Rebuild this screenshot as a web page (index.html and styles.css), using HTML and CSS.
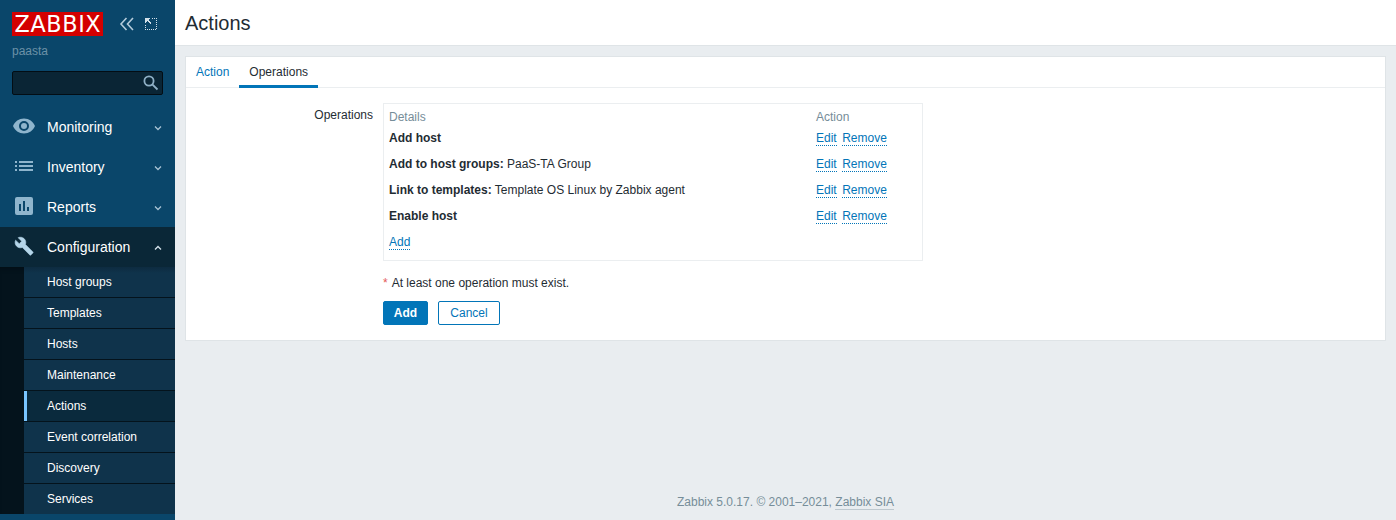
FILE: index.html
```html
<!DOCTYPE html>
<html lang="en">
<head>
<meta charset="utf-8">
<title>Actions</title>
<link rel="stylesheet" href="styles.css">
</head>
<body>
<aside class="sidebar">
  <div class="brand">
    <svg class="logo" width="91" height="24" viewBox="0 0 91 24"><rect width="91" height="24" fill="#d40000"/><text class="logo-text" x="2.600" y="20.300" textLength="86" lengthAdjust="spacing">ZABBIX</text></svg>
    <svg class="collapse" width="16" height="14" viewBox="0 0 16 14"><path d="M7.500 1 2 7l5.500 6M14 1 8.500 7 14 13"/></svg>
    <svg class="kiosk" width="12" height="12" viewBox="0 0 12 12" shape-rendering="crispEdges"><path d="M7 .5h1M9 .5h1M11 .5h1M11 2.500h1M11 4.500h1M11 6.500h1M11 8.500h1M11 10.500h1M0 7.500h1M0 9.500h1M0 11.500h1M2 11.500h1M4 11.500h1M6 11.500h1M8 11.500h1M10 11.500h1"/><path d="M0 .5h5M0 1.500h4M0 2.500h4M0 3.500h2M3 3.500h2M0 4.500h1M4 4.500h2M5 5.500h1"/></svg>
  </div>
  <div class="server">paasta</div>
  <div class="search"><svg width="16" height="16" viewBox="0 0 16 16"><circle cx="6" cy="6" r="4.600"/><path d="m9.300 9.300 5.200 5.200"/></svg></div>
  <nav class="menu">
    <a class="item"><svg class="icon" width="24" height="24" viewBox="0 0 24 24"><path fill-rule="evenodd" d="M12 4.500C7 4.500 2.730 7.610 1 12c1.730 4.390 6 7.500 11 7.500s9.270-3.110 11-7.500c-1.730-4.390-6-7.500-11-7.500zM12 17a5 5 0 1 1 0-10 5 5 0 0 1 0 10zm0-8a3 3 0 1 0 0 6 3 3 0 0 0 0-6z"/></svg><span>Monitoring</span><svg class="chev" width="8" height="6" viewBox="0 0 8 6"><path d="m1 1.500 3 3 3-3"/></svg></a>
    <a class="item"><svg class="icon" width="24" height="24" viewBox="0 0 24 24" shape-rendering="crispEdges"><path d="M3 7h2v2H3zM7 7h14v2H7zM3 11h2v2H3zM7 11h14v2H7zM3 15h2v2H3zM7 15h14v2H7z"/></svg><span>Inventory</span><svg class="chev" width="8" height="6" viewBox="0 0 8 6"><path d="m1 1.500 3 3 3-3"/></svg></a>
    <a class="item"><svg class="icon" width="24" height="24" viewBox="0 0 24 24"><path fill-rule="evenodd" d="M5 3h14a2 2 0 0 1 2 2v14a2 2 0 0 1-2 2H5a2 2 0 0 1-2-2V5a2 2 0 0 1 2-2zM7 10v7h2v-7zM11 7v10h2V7zM15 13v4h2v-4z"/></svg><span>Reports</span><svg class="chev" width="8" height="6" viewBox="0 0 8 6"><path d="m1 1.500 3 3 3-3"/></svg></a>
    <a class="item item-open"><svg class="icon" width="24" height="24" viewBox="0 0 24 24"><g transform="translate(2.300 2.300) scale(.82)"><path stroke-width=".7" d="m22.700 19-9.100-9.100c.9-2.300.4-5-1.500-6.900-2-2-5-2.400-7.400-1.300L9 6 6 9 1.600 4.700C.4 7.100.9 10.100 2.900 12.100c1.900 1.900 4.600 2.400 6.900 1.500l9.100 9.100c.4.4 1 .4 1.400 0l2.300-2.300c.5-.4.5-1.100.1-1.400z"/></g></svg><span>Configuration</span><svg class="chev" width="8" height="6" viewBox="0 0 8 6"><path d="m1 4.500 3-3 3 3"/></svg></a>
    <ul class="submenu">
      <li>Host groups</li>
      <li>Templates</li>
      <li>Hosts</li>
      <li>Maintenance</li>
      <li class="current">Actions</li>
      <li>Event correlation</li>
      <li>Discovery</li>
      <li>Services</li>
    </ul>
  </nav>
</aside>
<div class="wrapper">
  <header class="header"><h1>Actions</h1></header>
  <main class="panel">
    <div class="tabs"><a class="tab">Action</a><a class="tab tab-active">Operations</a></div>
    <div class="form">
      <div class="label">Operations</div>
      <div class="field">
        <div class="operations">
          <div class="row row-head"><span>Details</span><span>Action</span></div>
          <div class="row"><span><b>Add host</b></span><span class="links"><a class="link">Edit</a><a class="link">Remove</a></span></div>
          <div class="row"><span><b>Add to host groups:</b> PaaS-TA Group</span><span class="links"><a class="link">Edit</a><a class="link">Remove</a></span></div>
          <div class="row"><span><b>Link to templates:</b> Template OS Linux by Zabbix agent</span><span class="links"><a class="link">Edit</a><a class="link">Remove</a></span></div>
          <div class="row"><span><b>Enable host</b></span><span class="links"><a class="link">Edit</a><a class="link">Remove</a></span></div>
          <div class="row"><span class="links"><a class="link">Add</a></span></div>
        </div>
        <div class="note"><span class="asterisk">*</span>At least one operation must exist.</div>
        <div class="buttons"><button class="btn btn-primary">Add</button><button class="btn">Cancel</button></div>
      </div>
    </div>
  </main>
  <footer class="footer">Zabbix 5.0.17. © 2001–2021, <a class="footer-link">Zabbix SIA</a></footer>
</div>
</body>
</html>
```
FILE: styles.css
```css
* { box-sizing: border-box; }
body {
  margin: 0;
  display: flex;
  height: 520px;
  overflow: hidden;
  background: #e9edf0;
  color: #1f2c33;
  font: 12px/14px "Liberation Sans", Arial, sans-serif;
}
.sidebar { width: 175px; flex: none; background: #0a466a; }
.brand { display: flex; align-items: center; padding: 12px 0 0 12px; height: 36px; }
.logo { overflow: visible; }
.logo-text { font: 22.300px "DejaVu Sans", sans-serif; fill: #fff; }
.collapse { margin-left: 16px; fill: none; stroke: #b4cbdb; stroke-width: 1.600; }
.kiosk { margin-left: 10px; stroke: #d3e0e9; stroke-width: 1; }
.server { padding: 8px 12px 0; height: 35px; color: #6c91a7; }
.search {
  display: flex;
  justify-content: flex-end;
  align-items: center;
  width: 151px;
  height: 24px;
  margin: 0 12px 12px;
  padding-right: 3px;
  background: #0a2535;
  border: 1px solid #030d14;
  border-radius: 2px;
}
.search svg { fill: none; stroke: #8fb0c6; stroke-width: 1.800; }
.item { display: flex; align-items: center; height: 40px; padding: 0 13px 0 12px; color: #fff; font-size: 14px; }
.item span { flex: 1; margin-left: 11px; }
.icon { fill: #8fb5cd; margin-top: -2px; }
.chev { fill: none; stroke: #a9c3d4; stroke-width: 1.300; margin-top: 2px; }
.item-open { background: #0a2737; }
.item-open .icon { fill: #b4d5e9; stroke: #b4d5e9; }
.item-open .chev { stroke: #d4e2eb; }
.submenu {
  list-style: none;
  margin: 0;
  padding: 0 0 0 24px;
  background: #04131c;
  color: #fff;
  box-shadow: inset 0 5px 5px -4px #030d14;
}
.submenu li { height: 31px; padding: 8px 0 0 23px; background: #0f334b; border-bottom: 1px solid #04131c; }
.submenu li:first-child { background: linear-gradient(#0d2b40, #0f334b 6px); }
.submenu li:last-child { height: 30px; border-bottom: 0; }
.submenu .current { background: linear-gradient(90deg, #79c5ff 3px, #0a2a3d 3px); }
.wrapper { flex: 1; display: flex; flex-direction: column; }
.header { height: 46px; padding: 11px 10px 0; background: #fff; border-bottom: 1px solid #dfe4e7; }
h1 { margin: 0; font-size: 20px; line-height: 24px; font-weight: 400; }
.panel { height: 285px; margin: 10px 10px 0; background: #fff; border: 1px solid #dfe4e7; }
.tabs { display: flex; height: 31px; border-bottom: 1px solid #ebeef0; }
.tab { height: 31px; padding: 8px 10px 0; color: #0275b8; }
.tab-active { color: #1f2c33; border-bottom: 3px solid #0275b8; }
.form { display: flex; padding-top: 15px; }
.label { width: 187px; padding-top: 5px; text-align: right; }
.field { margin-left: 10px; }
.operations { width: 540px; height: 158px; padding: 6px 5px 0; border: 1px solid #ebeef0; }
.row { display: grid; grid-template-columns: 427px auto; height: 26px; align-items: start; }
.row-head { height: 21px; color: #768d99; }
.links { display: flex; gap: 5.500px; }
.link { height: 15px; color: #0275b8; border-bottom: 1px dotted #0275b8; }
.note { margin-top: 15px; }
.asterisk { margin-right: 4px; color: #e45959; }
.buttons { display: flex; gap: 10px; margin-top: 11px; }
.btn {
  height: 24px;
  width: 62px;
  padding: 0;
  font: inherit;
  color: #0275b8;
  background: #fff;
  border: 1px solid #0275b8;
  border-radius: 2px;
}
.btn-primary { width: 45px; color: #fff; background: #0275b8; font-weight: 700; }
.footer { margin-top: auto; padding-bottom: 10px; text-align: center; color: #768d99; }
.footer-link { display: inline-block; height: 15px; border-bottom: 1px solid #bfc9cf; }
```
